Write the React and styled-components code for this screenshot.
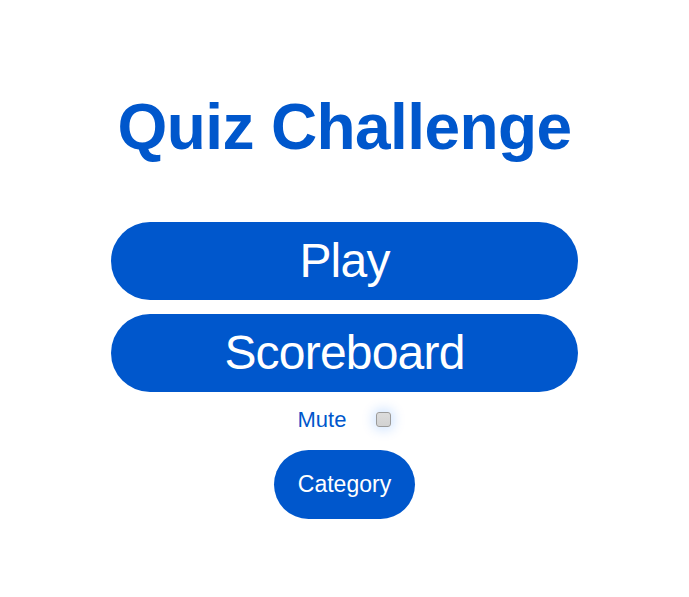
import React from "react";
import styled, { createGlobalStyle } from "styled-components";

const Global = createGlobalStyle`
  html, body { margin: 0; padding: 0; background: #ffffff; }
  body { font-family: "Liberation Sans", Arial, sans-serif; }
`;

const BLUE = "#0057cc";

const Page = styled.main`
  display: flex;
  flex-direction: column;
  align-items: center;
  padding-top: 91px;
`;

const Title = styled.h1`
  margin: 0 0 57px;
  font-size: 64px;
  line-height: 73.6px;
  font-weight: 700;
  letter-spacing: -0.6px;
  color: ${BLUE};
`;

const Menu = styled.div`
  display: flex;
  flex-direction: column;
  align-items: center;
  gap: 14px;
`;

const BigButton = styled.button`
  width: 467px;
  padding: 11px 0;
  border: none;
  border-radius: 40px;
  background: ${BLUE};
  color: #ffffff;
  font-family: "Liberation Sans", Arial, sans-serif;
  font-size: 48px;
  line-height: 56px;
  letter-spacing: -0.8px;
  cursor: pointer;
`;

const MuteRow = styled.label`
  display: flex;
  align-items: center;
  gap: 30px;
  margin-top: 15px;
  color: ${BLUE};
  font-size: 22px;
  line-height: 25px;
`;

const Check = styled.input`
  appearance: none;
  -webkit-appearance: none;
  margin: 0;
  width: 15px;
  height: 15px;
  border: 1px solid #9a9a9a;
  border-radius: 3px;
  background: linear-gradient(#dcdcdc, #d2d2d2);
  box-shadow: 0 0 12px 3px rgba(0, 110, 255, 0.18);
`;

const SmallButton = styled.button`
  margin-top: 18px;
  padding: 21.5px 24px;
  border: none;
  border-radius: 40px;
  background: ${BLUE};
  color: #ffffff;
  font-family: "Liberation Sans", Arial, sans-serif;
  font-size: 23px;
  line-height: 26px;
  cursor: pointer;
`;

export default function App() {
  return (
    <>
      <Global />
      <Page>
        <Title>Quiz Challenge</Title>
        <Menu>
          <BigButton>Play</BigButton>
          <BigButton>Scoreboard</BigButton>
        </Menu>
        <MuteRow>
          Mute
          <Check type="checkbox" />
        </MuteRow>
        <SmallButton>Category</SmallButton>
      </Page>
    </>
  );
}
